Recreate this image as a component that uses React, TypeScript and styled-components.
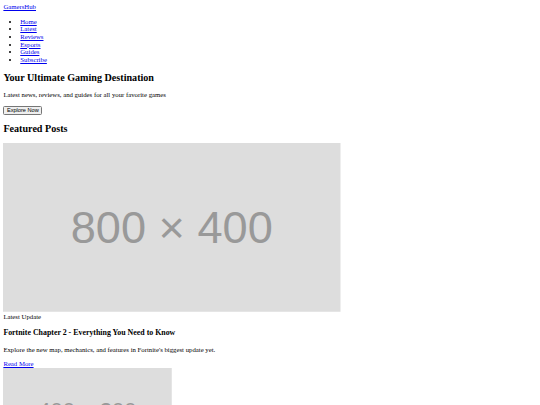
import styled, { createGlobalStyle } from 'styled-components';

// The reference is a 1280px-wide default-styled page shrunk to 540px.
const SCALE = 540 / 1280;

const GlobalStyle = createGlobalStyle`
  html, body {
    margin: 0;
    background: #ffffff;
  }
`;

const Page = styled.div`
  zoom: ${SCALE};
  padding: 8px;
  font-family: 'Liberation Serif', 'Times New Roman', serif;
  font-size: 16px;
  line-height: 1.125;
  color: #000000;

  a {
    color: #0000ee;
  }
`;

const Header = styled.header``;

const Logo = styled.a``;

const NavList = styled.ul`
  margin: 16px 0;
  padding-left: 40px;
`;

const Hero = styled.section``;

const HeroTitle = styled.h2`
  font-size: 1.5em;
  margin: 0.83em 0;
`;

const Text = styled.p`
  margin: 1em 0;
`;

const Button = styled.button`
  font-family: 'Liberation Sans', Arial, sans-serif;
  font-size: 13.333px;
  line-height: 15px;
`;

const SectionTitle = styled.h2`
  font-size: 1.5em;
  margin: 0.83em 0;
`;

const Post = styled.article``;

const Tag = styled.div``;

const PostTitle = styled.h3`
  font-size: 1.17em;
  margin: 1em 0;
`;

const Thumb = styled.svg`
  vertical-align: baseline;
`;

function Placeholder({ w, h, size }: { w: number; h: number; size: number }) {
  return (
    <Thumb width={w} height={h} viewBox={`0 0 ${w} ${h}`}>
      <rect width={w} height={h} fill="#dddddd" />
      <text
        x={w / 2}
        y={h / 2}
        fill="#999999"
        fontFamily="'Liberation Sans', Arial, sans-serif"
        fontSize={size}
        textAnchor="middle"
        dominantBaseline="central"
      >
        {w} × {h}
      </text>
    </Thumb>
  );
}

const navItems = ['Home', 'Latest', 'Reviews', 'Esports', 'Guides', 'Subscribe'];

export default function App() {
  return (
    <>
      <GlobalStyle />
      <Page>
        <Header>
          <Logo href="#">GamersHub</Logo>
          <nav>
            <NavList>
              {navItems.map((item) => (
                <li key={item}>
                  <a href="#">{item}</a>
                </li>
              ))}
            </NavList>
          </nav>
        </Header>
        <Hero>
          <HeroTitle>Your Ultimate Gaming Destination</HeroTitle>
          <Text>Latest news, reviews, and guides for all your favorite games</Text>
          <Button>Explore Now</Button>
        </Hero>
        <section>
          <SectionTitle>Featured Posts</SectionTitle>
          <Post>
            <Placeholder w={800} h={400} size={107} />
            <Tag>Latest Update</Tag>
            <PostTitle>Fortnite Chapter 2 - Everything You Need to Know</PostTitle>
            <Text>Explore the new map, mechanics, and features in Fortnite's biggest update yet.</Text>
            <a href="#">Read More</a>
          </Post>
          <Post>
            <Placeholder w={400} h={200} size={52} />
            <Tag>Guide</Tag>
            <PostTitle>Mastering Valorant: Tips for Beginners</PostTitle>
          </Post>
        </section>
      </Page>
    </>
  );
}
